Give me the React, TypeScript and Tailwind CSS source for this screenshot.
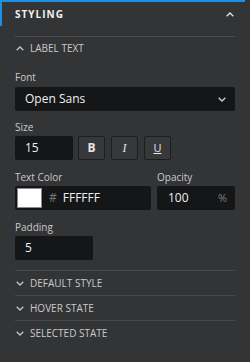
import { type ReactNode } from "react";

const font = { fontFamily: '"Open Sans", "Noto Sans", sans-serif' };

function Chevron({ up, className }: { up?: boolean; className?: string }) {
  return (
    <svg width="8" height="5" viewBox="0 0 8 5" className={className} fill="none">
      <path
        d={up ? "M0.7 4.3 L4 1 L7.3 4.3" : "M0.7 0.7 L4 4 L7.3 0.7"}
        stroke="currentColor"
        strokeWidth="1.3"
      />
    </svg>
  );
}

function Label({ children }: { children: ReactNode }) {
  return <div className="text-[10px] leading-[14px] text-[#c9cacb]">{children}</div>;
}

function Field({ children, className }: { children: ReactNode; className?: string }) {
  return (
    <div
      className={`flex items-center h-[24px] rounded-[2px] bg-[#151618] text-[12px] text-[#f0f0f0] ${className ?? ""}`}
    >
      {children}
    </div>
  );
}

function StyleBtn({ children }: { children: ReactNode }) {
  return (
    <div className="flex items-center justify-center w-[27px] h-[24px] rounded-[2px] border border-[#1d1e20] bg-[#37383a] text-[12px] text-[#e6e6e6]">
      {children}
    </div>
  );
}

function Section({ title }: { title: string }) {
  return (
    <div className="flex items-center h-[25px] border-t border-[#47484a] text-[10px] text-[#c9cacb]">
      <Chevron className="ml-[1px] text-[#c4c4c4]" />
      <span className="ml-[6px]">{title}</span>
    </div>
  );
}

export default function App() {
  return (
    <div className="w-[250px] h-[362px] bg-[#333436] overflow-hidden" style={font}>
      <div className="h-[2px] bg-[#1c8fe6] mr-[5px]" />
      <div className="flex items-center h-[24px] border-l-2 border-[#1c8fe6] pl-[13px] pr-[16px]">
        <span className="text-[10px] font-bold tracking-[1px] text-[#f2f2f2]">STYLING</span>
        <Chevron up className="ml-auto text-[#e8e8e8]" />
      </div>

      <div className="mx-[15px] mt-[10px]">
        <div className="flex items-center h-[24px] border-t border-[#4a4b4d] text-[10px] text-[#c9cacb]">
          <Chevron up className="ml-[1px] text-[#c4c4c4]" />
          <span className="ml-[6px]">LABEL TEXT</span>
        </div>

        <div className="mt-[10px]">
          <Label>Font</Label>
          <Field className="mt-[3px] pl-[10px] pr-[9px]">
            <span>Open Sans</span>
            <Chevron className="ml-auto text-[#cfcfcf]" />
          </Field>
        </div>

        <div className="mt-[9px]">
          <Label>Size</Label>
          <div className="flex gap-[6px] mt-[2px]">
            <Field className="w-[58px] pl-[10px]">15</Field>
            <div className="flex gap-[6px] ml-[-1px]">
              <StyleBtn>
                <span className="font-bold">B</span>
              </StyleBtn>
              <StyleBtn>
                <span className="italic" style={{ fontFamily: '"Liberation Serif", serif' }}>
                  I
                </span>
              </StyleBtn>
              <StyleBtn>
                <span className="underline text-[11px]">U</span>
              </StyleBtn>
            </div>
          </div>
        </div>

        <div className="flex gap-[6px] mt-[10px]">
          <div className="w-[136px]">
            <Label>Text Color</Label>
            <Field className="mt-[2px] pl-[2px]">
              <div className="w-[25px] h-[20px] bg-white border border-[#8a8a8a]" />
              <span className="ml-[7px] text-[#77787a]">#</span>
              <span className="ml-[6px]">FFFFFF</span>
            </Field>
          </div>
          <div className="w-[78px]">
            <Label>Opacity</Label>
            <Field className="mt-[2px] pl-[11px] pr-[8px]">
              <span>100</span>
              <span className="ml-auto text-[#7d7e80] text-[11px]">%</span>
            </Field>
          </div>
        </div>

        <div className="mt-[10px]">
          <Label>Padding</Label>
          <Field className="mt-[2px] w-[78px] pl-[10px]">5</Field>
        </div>

        <div className="mt-[10px]">
          <Section title="DEFAULT STYLE" />
          <Section title="HOVER STATE" />
          <Section title="SELECTED STATE" />
        </div>
      </div>
    </div>
  );
}
